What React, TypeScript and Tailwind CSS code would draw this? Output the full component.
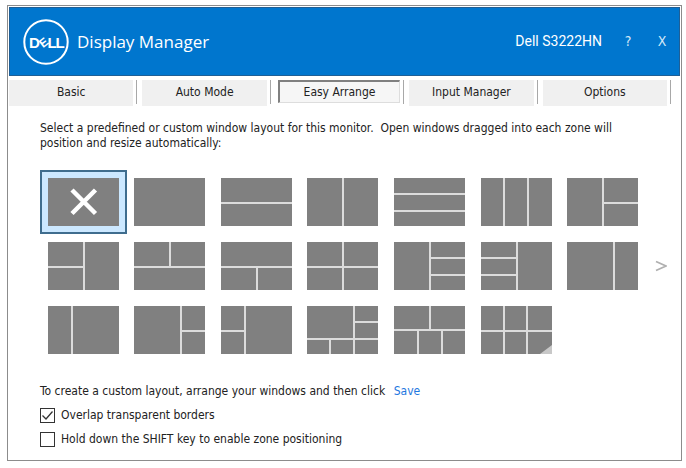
import { useState } from 'react'

interface Layout {
  name: string
  lines: string
  corner?: boolean
}

// Divider lines are drawn in a 71 x 48 box
const layouts: Layout[] = [
  { name: 'None', lines: '' },
  { name: 'Full', lines: '' },
  { name: 'Two rows', lines: 'M0 25H71' },
  { name: 'Two columns', lines: 'M36 0V48' },
  { name: 'Three rows', lines: 'M0 16H71M0 33H71' },
  { name: 'Three columns', lines: 'M23 0V48M47 0V48' },
  { name: 'Left and two right', lines: 'M36 0V48M36 25H71' },
  { name: 'Two left and right', lines: 'M36 0V48M0 25H36' },
  { name: 'Two top and bottom', lines: 'M36 0V25M0 25H71' },
  { name: 'Top and two bottom', lines: 'M36 25V48M0 25H71' },
  { name: 'Quarters', lines: 'M36 0V48M0 25H71' },
  { name: 'Left and three right', lines: 'M36 0V48M36 16H71M36 33H71' },
  { name: 'Three left and right', lines: 'M36 0V48M0 16H36M0 33H36' },
  { name: 'Wide left', lines: 'M47 0V48' },
  { name: 'Wide right', lines: 'M24 0V48' },
  { name: 'Wide left and two right', lines: 'M47 0V48M47 25H71' },
  { name: 'Two left and wide right', lines: 'M24 0V48M0 25H24' },
  { name: 'Main and five', lines: 'M47 0V48M47 16H71M0 33H71M23 33V48' },
  { name: 'Two top and three bottom', lines: 'M0 24H71M36 0V24M24 24V48M48 24V48' },
  { name: 'Six', lines: 'M23 0V48M46 0V48M0 25H71', corner: true },
]

const tabs = ['Basic', 'Auto Mode', 'Easy Arrange', 'Input Manager', 'Options']

function DellLogo() {
  return (
    <svg width="46" height="46" viewBox="0 0 46 46" role="img" aria-label="Dell" className="shrink-0">
      <circle cx="23" cy="23" r="21.7" fill="none" stroke="white" strokeWidth="2" />
      <g fill="white" fontSize="15" fontWeight="700" fontFamily="'Liberation Sans', Arial, sans-serif">
        <text x="6" y="28.5">D</text>
        <text x="20.5" y="27.7" textAnchor="middle" fontSize="12" transform="rotate(-38 20.5 23.5)">E</text>
        <text x="24.5" y="28.5">L</text>
        <text x="32.5" y="28.5">L</text>
      </g>
    </svg>
  )
}

function LayoutTile({ layout, selected, onSelect }: { layout: Layout; selected: boolean; onSelect: () => void }) {
  return (
    <button
      type="button"
      aria-label={layout.name}
      aria-pressed={selected}
      onClick={onSelect}
      className={`flex h-16 items-center justify-center border-2 ${selected ? 'border-[#3f6d8e] bg-[#cce8ff]' : 'border-transparent'}`}
    >
      <svg width="71" height="48" viewBox="0 0 71 48" className="shrink-0">
        <rect width="71" height="48" fill="#808080" />
        <path d={layout.lines} stroke="#dcdcdc" strokeWidth="2" fill="none" />
        {layout.name === 'None' && <path d="M24 12L47.5 35.5M47.5 12L24 35.5" stroke="white" strokeWidth="4.5" />}
        {layout.corner && <path d="M59 48L71 39V48Z" fill="#c8c8c8" />}
      </svg>
    </button>
  )
}

interface CheckRowProps {
  label: string
  checked: boolean
  onChange: (checked: boolean) => void
}

function CheckRow({ label, checked, onChange }: CheckRowProps) {
  return (
    <label className="flex h-6 items-center gap-[6px]">
      <span className="grid">
        <input
          type="checkbox"
          checked={checked}
          onChange={(e) => onChange(e.target.checked)}
          className="col-start-1 row-start-1 size-[15px] appearance-none border border-[#333] bg-white"
        />
        {checked && (
          <svg width="15" height="15" viewBox="0 0 15 15" className="pointer-events-none col-start-1 row-start-1">
            <path d="M2.5 7.5L6 11L12.5 3.5" fill="none" stroke="#333" strokeWidth="1.3" />
          </svg>
        )}
      </span>
      {label}
    </label>
  )
}

export default function App() {
  const [activeTab, setActiveTab] = useState('Easy Arrange')
  const [selected, setSelected] = useState(0)
  const [overlap, setOverlap] = useState(true)
  const [shiftKey, setShiftKey] = useState(false)

  return (
    <div className="bg-white pt-[5px] pr-[4px] pb-[6px] pl-[7px] font-['DejaVu_Sans_Condensed','DejaVu_Sans',sans-serif] text-[12px] leading-[15px] text-[#222]">
      <div className="border border-[#8c8c8c] bg-white pt-px pr-px pl-px">
        <header className="flex h-[69px] items-center border border-[#1f5f96] bg-[#0076ce] pr-[9px] pl-[13px] text-white">
          <DellLogo />
          <h1 className="ml-2 font-['Open_Sans',sans-serif] text-[17px] leading-6">Display Manager</h1>
          <span className="ml-auto font-[Roboto,sans-serif] text-[14px]">Dell S3222HN</span>
          <button type="button" aria-label="Help" className="ml-[18px] w-4 text-center text-[14px] text-[#d4e8f8]">?</button>
          <button type="button" aria-label="Close" className="ml-[18px] w-4 text-center text-[14px] text-[#d4e8f8]">X</button>
        </header>

        <nav className="mt-1 mr-[4px] flex h-[26px]">
          {tabs.map((tab) => (
            <div key={tab} className="flex flex-1 gap-[3px] pr-[5px]">
              <button
                type="button"
                onClick={() => setActiveTab(tab)}
                className={
                  tab === activeTab
                    ? 'ml-[2px] mb-[3px] flex-1 border-t-2 border-l-2 border-r border-b border-t-[#808080] border-l-[#808080] border-r-[#ddd] border-b-[#ddd] bg-[#f6f6f6] pt-px'
                    : 'flex-1 bg-[#f0f0f0] pb-px'
                }
              >
                {tab}
              </button>
              <span className="h-6 w-px bg-[#a8a8a8]" />
            </div>
          ))}
        </nav>

        <main className="pt-[15px] pb-[9px] pl-[31px]">
          <p className="max-w-[590px]">
            Select a predefined or custom window layout for this monitor.&nbsp; Open windows dragged into each zone will
            position and resize automatically:
          </p>

          <div className="mt-[19px] flex items-center">
            <div className="grid flex-1 grid-cols-7">
              {layouts.map((layout, i) => (
                <LayoutTile key={layout.name} layout={layout} selected={i === selected} onSelect={() => setSelected(i)} />
              ))}
            </div>
            <button type="button" aria-label="Next page" className="flex w-[34px] justify-center pr-1">
              <svg width="12" height="12" viewBox="0 0 12 12">
                <path d="M1 1.5L11 6L1 10.5" fill="none" stroke="#b0b0b0" strokeWidth="1.8" />
              </svg>
            </button>
          </div>

          <p className="mt-[22px] mb-1">
            To create a custom layout, arrange your windows and then click{' '}
            <a href="#save" className="ml-[5px] text-[#1f78e0]">Save</a>
          </p>
          <CheckRow label="Overlap transparent borders" checked={overlap} onChange={setOverlap} />
          <CheckRow label="Hold down the SHIFT key to enable zone positioning" checked={shiftKey} onChange={setShiftKey} />
        </main>
      </div>
    </div>
  )
}
